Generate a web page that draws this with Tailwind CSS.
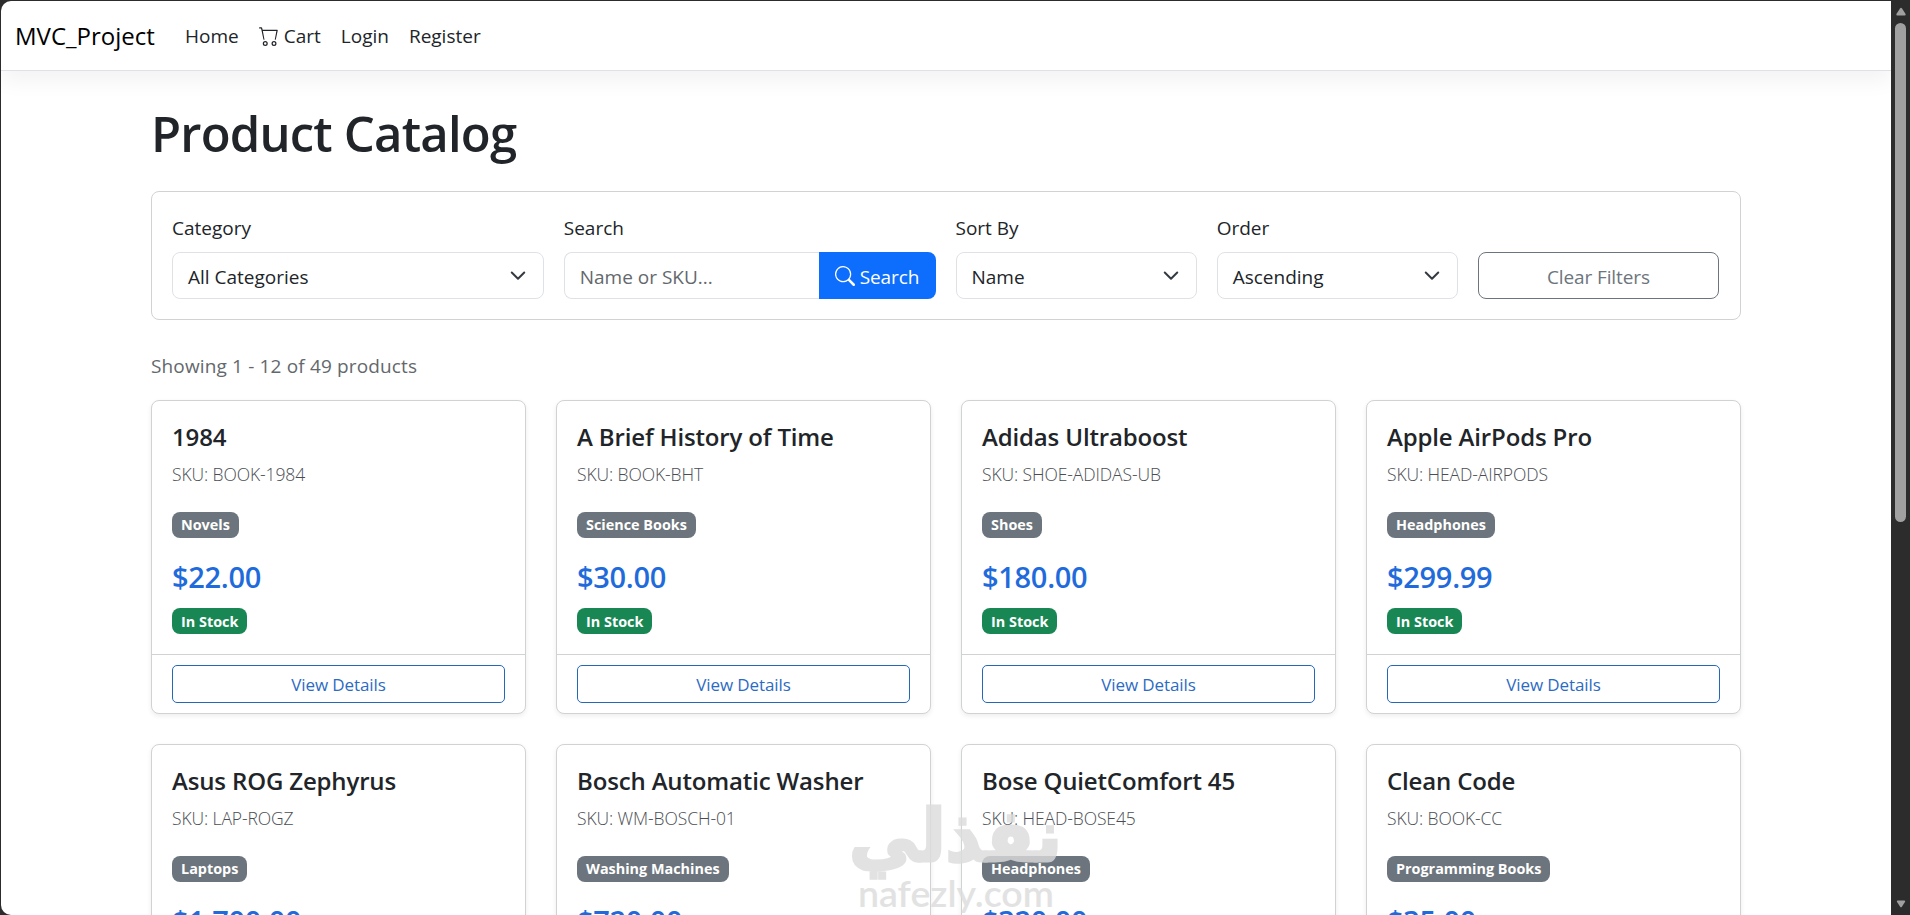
<!DOCTYPE html>
<html lang="en">
<head>
  <meta charset="UTF-8">
  <meta name="viewport" content="width=device-width, initial-scale=1.0">
  <title>Product Catalog - MVC_Project</title>
  <script src="https://cdn.jsdelivr.net/npm/@tailwindcss/browser@4"></script>
</head>
<body class="h-screen overflow-hidden bg-[#2c2c2c] font-['Open_Sans',sans-serif] text-[19px] leading-[30px] text-[#212529]">
  <div class="flex h-full pl-px pt-px">
    <div class="relative min-w-0 flex-1 overflow-hidden rounded-l-[10px] bg-white">
      <nav class="flex h-[70px] items-center border-b border-[#dee2e6] pl-[14px] shadow-[0_10px_20px_rgba(0,0,0,0.05)]">
        <a href="#" class="mr-[30px] w-[140px] whitespace-nowrap text-[24px] text-black">MVC_Project</a>
        <div class="flex items-center gap-5">
          <a href="#">Home</a>
          <a href="#" class="flex items-center gap-[5px]">
            <svg class="size-5" viewBox="0 0 16 16" fill="currentColor"><path d="M0 1.5A.5.5 0 0 1 .5 1H2a.5.5 0 0 1 .485.379L2.89 3H14.5a.5.5 0 0 1 .49.598l-1.5 7A.5.5 0 0 1 13 11H4a.5.5 0 0 1-.491-.408L2.01 3.607 1.61 2H.5a.5.5 0 0 1-.5-.5M3.102 4l1.313 7h8.17l1.313-7zM5 12a2 2 0 1 0 0 4 2 2 0 0 0 0-4m7 0a2 2 0 1 0 0 4 2 2 0 0 0 0-4m-7 1a1 1 0 1 1 0 2 1 1 0 0 1 0-2m7 0a1 1 0 1 1 0 2 1 1 0 0 1 0-2"/></svg>
            Cart
          </a>
          <a href="#">Login</a>
          <a href="#">Register</a>
        </div>
      </nav>

      <main class="ml-[150px] w-[1590px] pt-8">
        <h1 class="mb-7 text-[49px] font-semibold leading-[60px] tracking-[-0.8px]">Product Catalog</h1>

        <form class="mb-[31px] grid grid-cols-12 items-end gap-5 rounded-[8px] border border-[#d0d2d4] py-5 pl-5 pr-[21px]">
          <div class="col-span-3">
            <label class="mb-[9px] mt-px block">Category</label>
            <div class="flex h-[47px] items-center justify-between rounded-[8px] border border-[#dee2e6] px-[15px] pt-0.5">
              All Categories
              <svg class="-mt-0.5 size-5" viewBox="0 0 16 16" fill="none" stroke="#343a40" stroke-width="1.6" stroke-linecap="round" stroke-linejoin="round"><path d="m3 5.200 5 5 5-5"/></svg>
            </div>
          </div>
          <div class="col-span-3">
            <label class="mb-[9px] mt-px block">Search</label>
            <div class="flex h-[47px]">
              <div class="flex flex-1 items-center rounded-l-[8px] border border-r-0 border-[#dee2e6] px-[15px] pt-0.5 text-[#63686d]">Name or SKU...</div>
              <button type="button" class="flex w-[117px] items-center justify-center gap-[5px] rounded-r-[8px] bg-[#0d6efd] pt-0.5 tracking-[-0.1px] text-white">
                <svg class="-mt-0.5 size-5" viewBox="0 0 16 16" fill="currentColor"><path d="M11.742 10.344a6.5 6.5 0 1 0-1.397 1.398h-.001q.044.06.098.115l3.85 3.85a1 1 0 0 0 1.415-1.414l-3.85-3.85a1 1 0 0 0-.115-.1zM12 6.5a5.5 5.5 0 1 1-11 0 5.5 5.5 0 0 1 11 0"/></svg>
                Search
              </button>
            </div>
          </div>
          <div class="col-span-2">
            <label class="mb-[9px] mt-px block">Sort By</label>
            <div class="flex h-[47px] items-center justify-between rounded-[8px] border border-[#dee2e6] px-[15px] pt-0.5">
              Name
              <svg class="-mt-0.5 size-5" viewBox="0 0 16 16" fill="none" stroke="#343a40" stroke-width="1.6" stroke-linecap="round" stroke-linejoin="round"><path d="m3 5.200 5 5 5-5"/></svg>
            </div>
          </div>
          <div class="col-span-2">
            <label class="mb-[9px] mt-px block">Order</label>
            <div class="flex h-[47px] items-center justify-between rounded-[8px] border border-[#dee2e6] px-[15px] pt-0.5">
              Ascending
              <svg class="-mt-0.5 size-5" viewBox="0 0 16 16" fill="none" stroke="#343a40" stroke-width="1.6" stroke-linecap="round" stroke-linejoin="round"><path d="m3 5.200 5 5 5-5"/></svg>
            </div>
          </div>
          <button type="button" class="col-span-2 h-[47px] rounded-[8px] border border-[#6c757d] pt-0.5 tracking-[-0.1px] text-[#6c757d]">Clear Filters</button>
        </form>

        <p class="mb-[19px] tracking-[0.15px] text-[#63686d]">Showing 1 - 12 of 49 products</p>

        <div id="products" class="grid grid-cols-4 gap-[30px]"></div>
      </main>

      <!-- watermark -->
      <svg class="absolute left-[840px] top-[789px] h-[125px] w-[230px] opacity-80" viewBox="0 0 230 125" fill="#dcdcdc" stroke="#dcdcdc">
        <text x="8" y="71" direction="ltr" font-family="DejaVu Sans" font-weight="700" font-size="72" textLength="213" lengthAdjust="spacingAndGlyphs" stroke-width="3">نفذلي</text>
        <text x="17" y="117" font-family="Lato" font-weight="600" font-size="37" textLength="196" lengthAdjust="spacingAndGlyphs" stroke-width="0">nafezly.com</text>
      </svg>
    </div>

    <!-- scrollbar -->
    <div class="flex w-[19px] flex-col items-center pb-[7px] pt-[6px]">
      <svg class="h-[9px] w-[10px]" viewBox="0 0 10 9" fill="#a0a0a0"><path d="M4 1.5Q5 0 6 1.5L9.6 7Q10 8.5 8.500 8.500H1.500Q0 8.500.4 7z"/></svg>
      <div class="mt-[7px] h-[499px] w-[11px] rounded-full bg-[#a0a0a0]"></div>
      <svg class="mt-auto h-[8px] w-[10px]" viewBox="0 0 10 9" fill="#a0a0a0"><path d="M4 7.500Q5 9 6 7.500L9.600 2Q10 .5 8.500.5H1.500Q0 .5.4 2z"/></svg>
    </div>
  </div>

  <script>
    const products = [
      ["1984", "BOOK-1984", "Novels", "$22.00"],
      ["A Brief History of Time", "BOOK-BHT", "Science Books", "$30.00"],
      ["Adidas Ultraboost", "SHOE-ADIDAS-UB", "Shoes", "$180.00"],
      ["Apple AirPods Pro", "HEAD-AIRPODS", "Headphones", "$299.99"],
      ["Asus ROG Zephyrus", "LAP-ROGZ", "Laptops", "$1,700.00"],
      ["Bosch Automatic Washer", "WM-BOSCH-01", "Washing Machines", "$720.00"],
      ["Bose QuietComfort 45", "HEAD-BOSE45", "Headphones", "$320.00"],
      ["Clean Code", "BOOK-CC", "Programming Books", "$35.00"]
    ];

    document.getElementById("products").innerHTML = products.map(([name, sku, category, price]) => `
      <div class="flex h-[314px] flex-col rounded-[8px] border border-[#d0d2d4] bg-white shadow-[0_2px_5px_rgba(0,0,0,0.075)]">
        <div class="flex flex-1 flex-col items-start px-5 pt-[21px]">
          <h5 class="mb-[9px] whitespace-nowrap text-[24px] font-semibold leading-[30px] tracking-[-0.15px]">${name}</h5>
          <p class="mb-[25px] text-[17.5px] font-light leading-[26px] tracking-[-0.1px] text-[#4a4e53]">SKU: ${sku}</p>
          <span class="mb-[21px] flex h-[26px] items-center rounded-[8px] bg-[#6c757d] px-[9px] text-[14.4px] font-bold text-white">${category}</span>
          <h4 class="mb-[13px] text-[29px] font-semibold leading-[36px] tracking-[-0.3px] text-[#1f6bdc]">${price}</h4>
          <span class="flex h-[26px] items-center rounded-[8px] bg-[#198754] px-[9px] pt-px text-[14.4px] font-bold text-white">In Stock</span>
        </div>
        <div class="flex h-[59px] items-center border-t border-[#d0d2d4] px-5">
          <a href="#" class="flex h-[38px] flex-1 items-center justify-center rounded-[5px] border border-[#2468b8] pt-px text-[17px] tracking-[-0.1px] text-[#2c6bc4]">View Details</a>
        </div>
      </div>`).join("");
  </script>
</body>
</html>
